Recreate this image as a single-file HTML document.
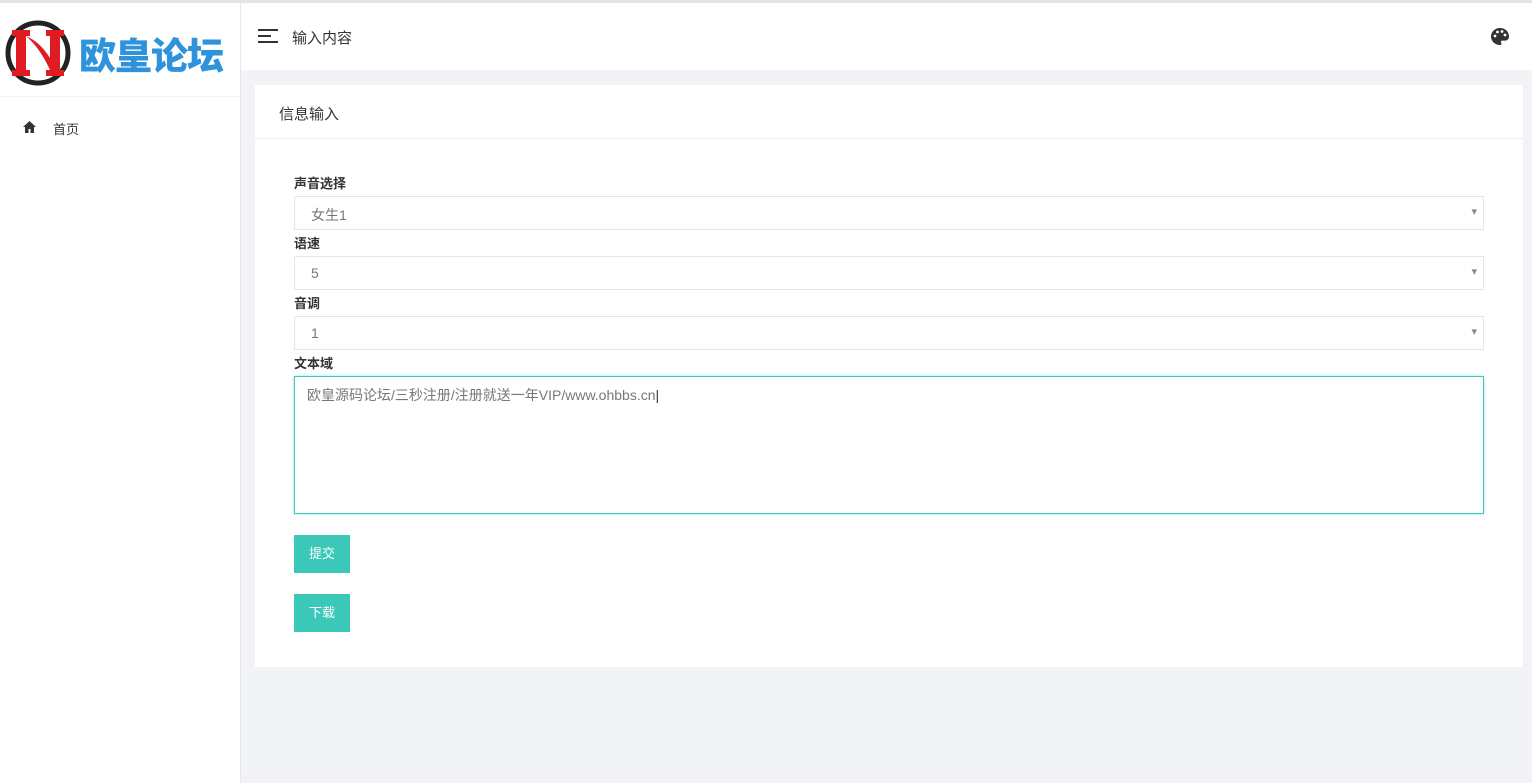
<!DOCTYPE html>
<html><head><meta charset="utf-8"><style>
*{box-sizing:border-box;margin:0;padding:0}
body{width:1532px;height:783px;overflow:hidden;background:#f2f3f7;font-family:"Liberation Sans","Noto Sans CJK SC",sans-serif;position:relative;color:#333}
.top{position:absolute;left:0;top:0;width:1532px;height:3px;background:#e4e4e4}
.side{position:absolute;left:0;top:3px;width:241px;height:780px;background:#fff;border-right:1px solid #e8e8e8}
.hdr{position:absolute;left:241px;top:3px;width:1291px;height:67px;background:#fff}
.card{position:absolute;left:255px;top:85px;width:1268px;height:582px;background:#fff}
.card .t{height:54px;border-bottom:1px solid #eee;padding:18px 24px;font-size:15px;color:#333}
label{position:absolute;left:294px;font-size:13px;font-weight:bold;color:#333}
.sel{position:absolute;left:294px;width:1190px;height:34px;border:1px solid #e6e6e6;background:#fff;font-size:14px;color:#777;padding:8px 16px}
.sel:after{content:"▾";position:absolute;right:6px;top:8px;font-size:11px;color:#888}
.btn{position:absolute;left:294px;width:56px;height:38px;background:#3cc8b8;color:#fff;font-size:13px;text-align:center;line-height:38px}
</style></head><body>
<div class="top"></div>
<div class="side">
<svg style="position:absolute;left:4px;top:15px" width="68" height="70" viewBox="0 0 68 70">
<circle cx="34" cy="35" r="30" fill="none" stroke="#222" stroke-width="5"/>
<path d="M8 12h18v6h-4v34h4v6H8v-6h4V18H8z M42 12h18v6h-4v34h4v6H42v-6h4V18h-4z" fill="#e01b22"/>
<path d="M22 18 Q36 30 46 52 L46 40 Q36 24 22 18z" fill="#e01b22"/>
</svg>
<div style="position:absolute;left:79px;top:26px;font-size:37px;font-weight:900;color:#2f93db;letter-spacing:-1px;font-family:'Noto Sans CJK SC',sans-serif;line-height:48px">欧皇论坛</div>
<div style="position:absolute;left:0;top:93px;width:240px;height:1px;background:#f3f3f3"></div>
<svg style="position:absolute;left:23px;top:118px" width="13" height="12" viewBox="0 0 13 12"><path d="M6.5 0 0 6h2v6h3.5V8h2v4H11V6h2z" fill="#333"/></svg>
<div style="position:absolute;left:53px;top:116px;font-size:13px;color:#333">首页</div>
</div>
<div class="hdr">
<svg style="position:absolute;left:17px;top:26px" width="20" height="15"><rect y="0" width="20" height="2" fill="#333"/><rect y="6" width="13" height="2" fill="#333"/><rect y="12" width="20" height="2" fill="#333"/></svg>
<div style="position:absolute;left:51px;top:24px;font-size:15px;color:#333">输入内容</div>
<svg style="position:absolute;left:1250px;top:25px" width="18" height="17" viewBox="0 0 18 17"><path d="M9 0C4 0 0 3.8 0 8.5S4 17 9 17c1 0 1.5-.6 1.5-1.3 0-.8-.7-1-.7-1.8 0-.8.6-1.3 1.4-1.3H14c2.3 0 4-1.7 4-4C18 3.6 14 0 9 0z" fill="#333"/><circle cx="4" cy="8" r="1.4" fill="#fff"/><circle cx="6.5" cy="4" r="1.4" fill="#fff"/><circle cx="11" cy="3.5" r="1.4" fill="#fff"/><circle cx="14" cy="7" r="1.4" fill="#fff"/></svg>
</div>
<div class="card"><div class="t">信息输入</div></div>
<label style="top:173px">声音选择</label>
<div class="sel" style="top:196px">女生1</div>
<label style="top:233px">语速</label>
<div class="sel" style="top:256px">5</div>
<label style="top:293px">音调</label>
<div class="sel" style="top:316px">1</div>
<label style="top:353px">文本域</label>
<div style="position:absolute;left:294px;top:376px;width:1190px;height:138px;border:1px solid #3cc8b8;box-shadow:0 0 3px #9ee4dc;padding:8px 12px;font-size:14px;color:#777">欧皇源码论坛/三秒注册/注册就送一年VIP/www.ohbbs.cn<span style="color:#333">|</span></div>
<div class="btn" style="top:535px">提交</div>
<div class="btn" style="top:594px">下载</div>
</body></html>
